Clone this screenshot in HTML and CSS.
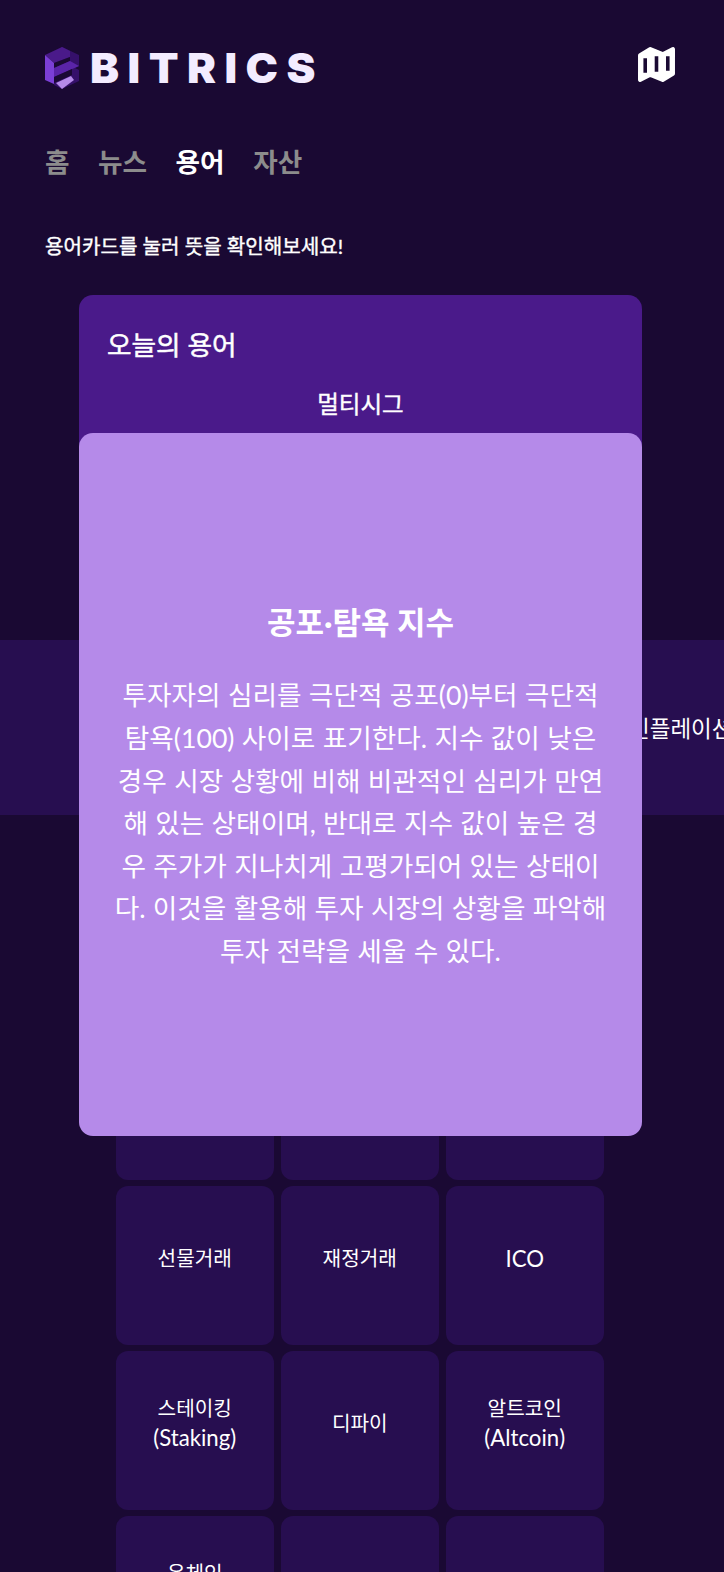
FILE: index.html
```html
<!DOCTYPE html>
<html lang="ko">
<head>
    <meta charset="UTF-8">
    <meta name="viewport" content="width=device-width, initial-scale=1.0">
    <title>Bitrics</title>
    <link rel="stylesheet" href="styles.css">
</head>
<body>
    <header class="topbar">
        <div class="brand">
            <svg class="brand-mark" viewBox="0 0 34 42" aria-hidden="true">
                <polygon points="17,0 34,8 34,19 30,21 34,23 34,34 17,42 9,38 9,8" fill="#35106a"/>
                <polygon points="0,8 17,0 25,4 25,10 9,16" fill="#4a1a8a"/>
                <polygon points="0,8 9,16 9,37 0,33" fill="#7b3fd6"/>
                <polygon points="9,16 25,10 25,14 9,21" fill="#1a0933"/>
                <polygon points="9,21 25,14 34,19 9,30" fill="#5a24a8"/>
                <polygon points="9,30 27,22 27,28 9,36" fill="#1a0933"/>
                <polygon points="11,36 26,29 29,33 17,42" fill="#b58ae9"/>
            </svg>
            <span class="brand-name">BITRICS</span>
        </div>
        <svg class="map-icon" viewBox="0 0 38 36" aria-hidden="true">
            <path d="M3 9 L13 3 L25 8 L35 3 V27 L25 33 L13 28 L3 33 Z" fill="#fff" stroke="#fff" stroke-width="4" stroke-linejoin="round"/>
            <path d="M8 12 L8 26 M19 10 L19 25 M30 10 L30 24" stroke="#1a0933" stroke-width="3.5"/>
        </svg>
    </header>

    <nav class="tabs">
        <a>홈</a>
        <a>뉴스</a>
        <a class="active">용어</a>
        <a>자산</a>
    </nav>

    <p class="hint">용어카드를 눌러 뜻을 확인해보세요!</p>

    <section class="today">
        <h2>오늘의 용어</h2>
        <p>멀티시그</p>
    </section>

    <div class="ticker">
        <span>인플레이션</span>
    </div>

    <div class="term-grid">
        <div class="term"></div>
        <div class="term"></div>
        <div class="term"></div>
        <div class="term"></div>
        <div class="term"></div>
        <div class="term"></div>
        <div class="term"><span>선물거래</span></div>
        <div class="term"><span>재정거래</span></div>
        <div class="term"><span class="en">ICO</span></div>
        <div class="term"><span>스테이킹<br><span class="en">(Staking)</span></span></div>
        <div class="term"><span>디파이</span></div>
        <div class="term"><span>알트코인<br><span class="en">(Altcoin)</span></span></div>
        <div class="term"><span>온체인<br><span class="en">(On-chain)</span></span></div>
        <div class="term"></div>
        <div class="term"></div>
    </div>

    <div class="modal">
        <h3>공포·탐욕 지수</h3>
        <p>투자자의 심리를 극단적 공포(0)부터 극단적 탐욕(100) 사이로 표기한다. 지수 값이 낮은 경우 시장 상황에 비해 비관적인 심리가 만연해 있는 상태이며, 반대로 지수 값이 높은 경우 주가가 지나치게 고평가되어 있는 상태이다. 이것을 활용해 투자 시장의 상황을 파악해 투자 전략을 세울 수 있다.</p>
    </div>
</body>
</html>
```

FILE: styles.css
```css
html, body {
    margin: 0;
    height: 1572px;
    overflow: hidden;
}
body {
    position: relative;
    background-color: #1a0933;
    color: #fff;
    font-family: Lato, "Noto Sans CJK KR", sans-serif;
}
.topbar {
    display: flex;
    justify-content: space-between;
    align-items: center;
    padding: 47px 48px 0 45px;
    height: 42px;
}
.brand {
    display: flex;
    align-items: center;
    gap: 11px;
}
.brand-mark {
    width: 34px;
    height: 42px;
}
.brand-name {
    font-family: Inter, sans-serif;
    font-weight: 900;
    font-size: 41px;
    line-height: 42px;
    letter-spacing: 8px;
    color: #f3ecff;
    transform: scaleX(1.06);
    transform-origin: left center;
}
.map-icon {
    width: 39px;
    height: 37px;
    margin-top: -7px;
}
.tabs {
    display: flex;
    gap: 28.5px;
    padding: 53px 45px 0;
    font-size: 26.67px;
    font-weight: 700;
    line-height: 40px;
    color: #8c8c8c;
}
.tabs .active {
    color: #fff;
}
.hint {
    margin: 50px 45px 0;
    font-size: 20.1px;
    line-height: 29px;
    -webkit-text-stroke: 0.4px #fff;
}
.today {
    margin: 34px 82px 0 79px;
    height: 320px;
    padding: 30px 28px;
    box-sizing: border-box;
    background-color: #4a1a8a;
    border-radius: 14px;
}
.today h2 {
    margin: 0;
    font-size: 26.67px;
    font-weight: 400;
    line-height: 40px;
    -webkit-text-stroke: 0.5px #fff;
}
.today p {
    margin: 21px 0 0;
    font-size: 23.5px;
    line-height: 36px;
    text-align: center;
    -webkit-text-stroke: 0.4px #fff;
}
.ticker {
    margin-top: 25px;
    height: 175px;
    padding: 71px 0 0 629px;
    box-sizing: border-box;
    background-color: #270e50;
    font-size: 22.5px;
    line-height: 36px;
    white-space: nowrap;
    overflow: hidden;
}
.term-grid {
    display: grid;
    grid-template-columns: repeat(3, 158.5px);
    grid-auto-rows: 158.5px;
    gap: 6.5px;
    margin: 41px 0 0 115.5px;
}
.term {
    display: flex;
    align-items: center;
    justify-content: center;
    padding-bottom: 13px;
    box-sizing: border-box;
    background-color: #270e50;
    border-radius: 12px;
    font-size: 20.2px;
    line-height: 29px;
    text-align: center;
}
.term .en {
    font-size: 1.1em;
}
.modal {
    position: absolute;
    top: 433px;
    left: 79px;
    width: 563px;
    height: 703px;
    padding: 4px 34px 0;
    box-sizing: border-box;
    display: flex;
    flex-direction: column;
    justify-content: center;
    background-color: #b58ae9;
    border-radius: 14px;
    text-align: center;
}
.modal h3 {
    margin: 0 0 30px;
    font-size: 31px;
    font-weight: 700;
    line-height: 44px;
}
.modal p {
    margin: 0;
    font-size: 26.67px;
    line-height: 42.6px;
    word-spacing: 0.5px;
    word-break: break-all;
}
```
